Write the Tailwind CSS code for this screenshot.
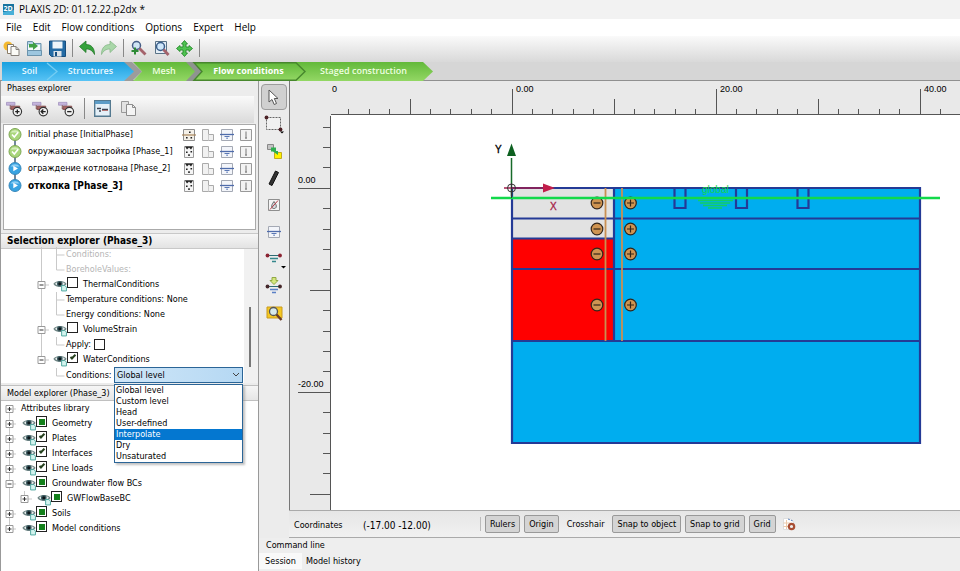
<!DOCTYPE html>
<html lang="en">
<head>
    <meta charset="UTF-8">
    <meta name="viewport" content="width=device-width, initial-scale=1.0">
    <title>PLAXIS 2D: 01.12.22.p2dx *</title>
    <script src="https://cdn.jsdelivr.net/npm/@tailwindcss/browser@4"></script>
</head>
<body class="h-screen flex flex-col overflow-hidden bg-[#ececec] text-black font-['DejaVu_Sans_Condensed','DejaVu_Sans',sans-serif] text-[9px] leading-[15px]">

  <!-- shared icons -->
  <svg class="hidden">
    <symbol id="eye" viewBox="0 0 13 13">
      <path d="M1 5.500C3 2.600 10 2.600 12 5.500C10 8.400 3 8.400 1 5.500Z" fill="#e8eeee" stroke="#6f8584" stroke-width="1"/>
      <circle cx="6.3" cy="5.4" r="2.6" fill="#3f5d63"/><circle cx="6.3" cy="5.3" r="1.4" fill="#0b1518"/>
      <path d="M8 7h3l1.500 1.500v3.500H8z" fill="#d3f3ee" stroke="#4fa79f" stroke-width=".9"/>
    </symbol>
    <symbol id="phase-done" viewBox="0 0 14 14">
      <circle cx="7" cy="7" r="6" fill="#a9d67c" stroke="#7da653"/><path d="M2.500 5a5 4 0 0 1 9 0z" fill="#d4edba"/>
      <path d="M4 7l2.300 2.500L10.200 4.800" fill="none" stroke="#fff" stroke-width="1.6"/>
    </symbol>
    <symbol id="phase-todo" viewBox="0 0 14 14">
      <circle cx="7" cy="7" r="6" fill="#38a3e2" stroke="#3987b8"/><path d="M2.500 5a5 4 0 0 1 9 0z" fill="#8fd0f5"/>
      <path d="M5.300 4.200L10 7l-4.700 2.800z" fill="#fff"/>
    </symbol>
    <symbol id="calc-k0" viewBox="0 0 14 14">
      <path d="M1.500 1.500h11v11h-11z" fill="#f4f0e8" stroke="#8d8d8d"/><path d="M0 7h14" stroke="#a9865a" stroke-width="1.2"/>
      <path d="M7 3.500h1.600V5H7zM4 9h1.600v1.600H4zM8.500 9h1.600v1.600H8.500z" fill="#222"/>
    </symbol>
    <symbol id="calc-plastic" viewBox="0 0 14 14">
      <path d="M2.500 1.500h9v11h-9z" fill="#f5f5f5" stroke="#9a9a9a"/>
      <path d="M3 1.500h8L9 4.500 7 2.500 5 4.500z" fill="#222"/><path d="M4 6.500h1.600v1.600H4zM8.500 6h1.600v1.600H8.500zM6.200 9.300h1.600v1.600H6.200z" fill="#222"/>
    </symbol>
    <symbol id="staged" viewBox="0 0 14 14">
      <path d="M1.500 1.500h6v5h5v6h-11z" fill="#f1f1f1" stroke="#aaa"/><path d="M7.500 6.500v6" stroke="#ccc"/>
    </symbol>
    <symbol id="water" viewBox="0 0 14 14">
      <path d="M1.500 1.500h11v11h-11z" fill="#f3f5fa" stroke="#a4a9b4"/><path d="M0 6.500h14" stroke="#4f6cab" stroke-width="1.300"/>
      <path d="M4.500 8.500h5M6.200 10.200h1.800" stroke="#5a78b5"/>
    </symbol>
    <symbol id="thermo" viewBox="0 0 14 14">
      <path d="M1.500 1.500h11v11h-11z" fill="#f3f3f3" stroke="#999"/><path d="M7 3.500v7M6 10h2" stroke="#777"/>
    </symbol>
    <symbol id="phase-bars" viewBox="0 0 18 18">
      <path d="M.5 2.500h9v3h-9z" fill="#c5b5dc" stroke="#a08fbd" stroke-width=".8"/>
      <path d="M4.500 5.500v4h3" fill="none" stroke="#7a4848"/><path d="M5.500 6.500h9v3.500h-9z" fill="#a86464" stroke="#7d4747" stroke-width=".8"/>
      <circle cx="12" cy="12.300" r="4.500" fill="#f2f2f2" stroke="#333" stroke-width="1.200"/>
    </symbol>
  </svg>

  <header>
    <div class="flex items-center gap-[5px] h-[19px] px-[3px] bg-[#f2f2f2] font-['Open_Sans','Noto_Sans',sans-serif] text-[10px]">
      <svg class="size-[11px]" viewBox="0 0 11 11" aria-hidden="true"><path d="M0 0h11v11H0z" fill="#17739f"/><path d="M0 8l11-2v5H0z" fill="#49b0d8"/><text x="0.500" y="7" font-size="7" font-weight="bold" fill="#fff">2D</text></svg>
      <h1>PLAXIS 2D: 01.12.22.p2dx *</h1>
    </div>
    <nav class="flex items-center gap-[11px] h-[17px] px-[6px] bg-white font-['Open_Sans','Noto_Sans',sans-serif] text-[10px]" aria-label="Menu">
      <button>File</button><button>Edit</button><button>Flow conditions</button><button>Options</button><button>Expert</button><button>Help</button>
    </nav>
    <div class="flex items-center gap-[6px] h-[26px] px-[3px] pb-[2px] bg-linear-to-b from-[#fafafa] to-[#d9d9d9]">
      <button aria-label="New"><svg class="size-[17px]" viewBox="0 0 17 17"><circle cx="5" cy="6" r="4.500" fill="#f5b92e"/><path d="M4.500 4.500h6v9h-6z" fill="#fff" stroke="#8b7d67"/><path d="M8 6.500h5l3 3v6H8z" fill="#fbfbf7" stroke="#85807a"/><path d="M13 6.500v3h3" fill="none" stroke="#85807a"/></svg></button>
      <button aria-label="Open"><svg class="size-[17px]" viewBox="0 0 17 17"><path d="M1.500 1.500h5l1.500 2h7v12h-13.500z" fill="#b6d4e6" stroke="#6b93ac"/><path d="M2 5h12v5H2z" fill="#f4fafc"/><path d="M3 4h4V2l5 4-5 4V7.500H3z" fill="#3fa045"/><path d="M1.500 10.500h14v5h-14z" fill="#9dc6df" stroke="#6b93ac"/></svg></button>
      <button aria-label="Save"><svg class="size-[17px]" viewBox="0 0 17 17"><path d="M.5 1h16v15.500h-14l-2-2z" fill="#246ba4" stroke="#174e7e"/><path d="M3.500 1.500h10v7h-10z" fill="#edf5fa"/><path d="M4.500 11h8v5.500h-8z" fill="#dce3e8"/><path d="M6 12h2v4H6z" fill="#174e7e"/></svg></button>
      <span class="w-px h-[18px] bg-[#888]"></span>
      <button aria-label="Undo"><svg class="size-4" viewBox="0 0 16 16"><path d="M.5 6.500L7 1v3.500c5 0 8.500 3 8.500 10C13.500 10.500 11 9 7 9v3.500z" fill="#35a23b" stroke="#237829" stroke-width=".8"/></svg></button>
      <button aria-label="Redo"><svg class="size-4" viewBox="0 0 16 16"><path d="M15.500 6.500L9 1v3.500c-5 0-8.500 3-8.500 10C2.500 10.500 5 9 9 9v3.500z" fill="#a9d7a9" stroke="#88b889" stroke-width=".8"/></svg></button>
      <span class="w-px h-[18px] bg-[#888]"></span>
      <button aria-label="Zoom"><svg class="size-[17px]" viewBox="0 0 17 17"><circle cx="6.500" cy="5.500" r="4" fill="#cfe4f4" stroke="#465e87" stroke-width="1.500"/><path d="M9.500 8.500l6 6" stroke="#a4636b" stroke-width="2.800"/><path d="M5 7.500v7M1.500 11h7" stroke="#2d8a35" stroke-width="2"/></svg></button>
      <button aria-label="Zoom window"><svg class="size-[17px]" viewBox="0 0 17 17"><path d="M2.500 1.500h11v12h-11z" fill="#e5eef5" stroke="#5a7387"/><circle cx="7.500" cy="6.500" r="4" fill="#cfe7fa" stroke="#3a5e8a" stroke-width="1.500"/><path d="M10.500 9.500l5 5.500" stroke="#a4636b" stroke-width="2.800"/></svg></button>
      <button aria-label="Zoom out full"><svg class="size-[17px]" viewBox="0 0 17 17"><path d="M8.500.5l3 3.500H10v3h3V5.500l3.500 3-3.500 3V10h-3v3h1.500l-3 3.500-3-3.500H7v-3H4v1.500L.5 8.500 4 5.500V7h3V4H5.500z" fill="#4fc351" stroke="#268a2b" stroke-width=".9"/></svg></button>
      <span class="w-px h-[18px] bg-[#888]"></span>
    </div>
    <nav class="relative flex h-[19px] bg-[#d6d6d6] border-b border-[#909090] text-[9px] leading-[18px] font-['Open_Sans','Noto_Sans',sans-serif] font-semibold text-[#e8f8ff]" aria-label="Modes">
      <svg class="absolute left-0 top-0 w-[434px] h-[19px]" viewBox="0 0 434 19" aria-hidden="true">
        <defs>
          <linearGradient id="blue" x1="0" y1="0" x2="0" y2="1"><stop offset="0" stop-color="#18a0df"/><stop offset="1" stop-color="#58c3f5"/></linearGradient>
          <linearGradient id="green" x1="0" y1="0" x2="0" y2="1"><stop offset="0" stop-color="#62b93a"/><stop offset="1" stop-color="#93d764"/></linearGradient>
        </defs>
        <path d="M122 0h10l10 9.500L132 19h-10z" fill="#9c9c9c"/>
        <path d="M2 0h122l10 9.500L124 19H2z" fill="url(#blue)"/>
        <path d="M47 1l10 8.500L47 18" fill="none" stroke="#74cdf3" stroke-width="1.300"/>
        <path d="M133 0h58l9 9.500-9 9.500h-58l9-9.500z" fill="url(#green)"/>
        <path d="M186 0h12l9 9.500-9 9.500h-12l9-9.500z" fill="#8f9490"/>
        <path d="M295 0h128l10 9.500L423 19H295z" fill="url(#green)"/>
        <path d="M194 .7h102l9 8.800-9 8.800H194l8-8.800z" fill="url(#green)" stroke="#47872d" stroke-width="1.400"/>
      </svg>
      <button class="relative w-[59px]">Soil</button>
      <button class="relative w-[63px]">Structures</button>
      <button class="relative w-[84px] text-[#efffe0]">Mesh</button>
      <button class="relative w-[85px] text-white font-bold">Flow conditions</button>
      <button class="relative w-[145px] text-[#efffe0]">Staged construction</button>
    </nav>
  </header>

  <div class="flex flex-1 min-h-0">
    <aside class="flex flex-col w-[259px] shrink-0 border-x border-[#999] bg-[#ececec]">
      <section>
        <h2 class="px-[6px]">Phases explorer</h2>
        <div class="flex items-center h-[27px] px-[5px] gap-[9px] pb-[2px] border-r-4 border-[#ececec] bg-linear-to-b from-[#fafafa] to-[#dadada]">
          <button aria-label="Add phase"><svg class="size-[17px]" viewBox="0 0 18 18"><use href="#phase-bars"/><path d="M12 10v4.600M9.700 12.300h4.600" stroke="#222" stroke-width="1.400"/></svg></button>
          <button aria-label="Insert phase"><svg class="size-[17px]" viewBox="0 0 18 18"><use href="#phase-bars"/><path d="M9.500 12.300h5M12 10l-2.300 2.300L12 14.600" fill="none" stroke="#222" stroke-width="1.400"/></svg></button>
          <button aria-label="Delete phase"><svg class="size-[17px]" viewBox="0 0 18 18"><use href="#phase-bars"/><path d="M9.700 12.300h4.600" stroke="#222" stroke-width="1.400"/></svg></button>
          <span class="w-px h-[21px] bg-[#888]"></span>
          <button aria-label="Edit phase"><svg class="size-[17px]" viewBox="0 0 17 17"><path d="M.7.7h15.600v15.600H.7z" fill="#e4f0f8" stroke="#547990" stroke-width="1.400"/><path d="M1 1h15v3H1z" fill="#5c9cc7"/><path d="M3 8.500h4M8 9.500h6M5 11h2" stroke="#3c4250" stroke-width="1.300"/><path d="M8 10.500h6" stroke="#b27474"/></svg></button>
          <button aria-label="Copy"><svg class="size-[17px]" viewBox="0 0 17 17"><path d="M1.500 1.500h7v11h-7z" fill="#e2e2e2" stroke="#999"/><path d="M6.500 4.500h6l3 3v8h-9z" fill="#f4f4f4" stroke="#8d8d8d"/><path d="M12.500 4.500v3h3" fill="none" stroke="#8d8d8d"/></svg></button>
        </div>
        <ul id="phases" class="h-[106px] mx-[2px] mt-px pt-px bg-white border border-[#aaa] leading-[17px]"></ul>
      </section>

      <section class="flex flex-col">
        <h2 class="mt-[3px] px-[6px] font-bold border-y border-[#c8c8c8] bg-linear-to-b from-[#f6f6f6] to-[#e3e3e3] text-[10px] leading-[14px]">Selection explorer (Phase_3)</h2>
        <div class="relative flex bg-white">
          <div id="selection" class="flex-1 pl-px -mt-[2px]"></div>
          <div class="w-[14px] bg-[#f1f1f1] pt-[58px]"><div class="w-[2px] h-[60px] ml-[5px] bg-[#777]"></div></div>
          <ul role="listbox" aria-label="Conditions options" class="absolute z-10 left-[113px] top-full mt-px w-[129px] bg-white border border-[#2b6597] shadow-[2px_2px_2px_#8888] leading-[11px]">
            <li role="option" class="px-px">Global level</li>
            <li role="option" class="px-px">Custom level</li>
            <li role="option" class="px-px">Head</li>
            <li role="option" class="px-px">User-defined</li>
            <li role="option" aria-selected="true" class="px-px bg-[#0477d0] text-white">Interpolate</li>
            <li role="option" class="px-px">Dry</li>
            <li role="option" class="px-px">Unsaturated</li>
          </ul>
        </div>
      </section>

      <section class="flex flex-col flex-1">
        <h2 class="mt-[2px] px-[6px] border-y border-[#c0c0c0] bg-linear-to-b from-[#f6f6f6] to-[#e6e6e6] leading-[14px]">Model explorer (Phase_3)</h2>
        <div id="model" class="flex-1 bg-white"></div>
      </section>
    </aside>

    <div class="flex flex-col flex-1 min-w-0">
      <div class="flex flex-1 min-h-0">
        <div class="flex flex-col items-center gap-[1px] w-[31px] shrink-0 pt-[3px] border-r border-[#777]" role="toolbar" aria-label="Tools">
          <button aria-label="Select" class="grid place-items-center size-[26px] rounded-sm border border-[#9c9c9c] bg-[#d0d0d0]"><svg class="size-4" viewBox="0 0 16 16"><path d="M3 1v12l3-2.500 2.200 5 2.300-1L8.300 9.500H12z" fill="#fff" stroke="#555"/></svg></button>
          <button aria-label="Select rectangle" class="grid place-items-center size-[26px]"><svg class="size-5" viewBox="0 0 20 20"><path d="M2.500 3.500h14v12h-14z" fill="#f1f1f1" stroke="#666" stroke-dasharray="2 1"/><circle cx="2.500" cy="3.500" r="1.900" fill="#4c2226"/><circle cx="16.500" cy="15.500" r="1.900" fill="#4c2226"/><path d="M16 17.500h4l-2 2z"/></svg></button>
          <button aria-label="Show materials" class="grid place-items-center size-[26px]"><svg class="size-4" viewBox="0 0 16 16"><path d="M1.500 1.500h6v5h-6z" fill="#c4c4c4" stroke="#888"/><path d="M8.500 9.500h7v6h-7z" fill="#fff200" stroke="#c0ab20"/><path d="M5 4.500h5V8h2v4L7 8.500H5z" fill="#2fae50"/></svg></button>
          <button aria-label="Draw" class="grid place-items-center size-[26px]"><svg class="size-4" viewBox="0 0 16 16"><path d="M9.500 1l3 1.500-6.500 13-3-1.500z" fill="#333" stroke="#111"/></svg></button>
          <button aria-label="Dry cluster" class="grid place-items-center size-[26px]"><svg class="size-4" viewBox="0 0 16 16"><path d="M2.500 2.500h11v11h-11z" fill="#f4f4f4" stroke="#8e8e8e"/><path d="M8 4.500c4 5 2 7 0 7s-4-2 0-7z" fill="#d8dce1" stroke="#666"/><path d="M4 12.500l8-9" stroke="#b33b44"/></svg></button>
          <button aria-label="Water conditions" class="grid place-items-center size-[26px]"><svg class="size-[14px]"><use href="#water"/></svg></button>
          <button aria-label="Create water level" class="grid place-items-center size-[26px]"><svg class="size-5 overflow-visible" viewBox="0 0 20 20"><path d="M4 6.500h13" stroke="#2e6c74"/><circle cx="3.500" cy="6.500" r="1.900" fill="#8c2433"/><circle cx="16" cy="6.500" r="1.900" fill="#8c2433"/><path d="M6 9.500h8M8 12.500h4" stroke="#35878c" stroke-width="1.500"/><path d="M17 17h5l-2.500 2.500z"/></svg></button>
          <button aria-label="Generate level" class="grid place-items-center size-[26px]"><svg class="size-5" viewBox="0 0 20 20"><path d="M8 1.500h4v3h2l-4 4-4-4h2z" fill="#d4e77d" stroke="#91a845"/><path d="M3 10.500h14" stroke="#2e6c74"/><circle cx="3.500" cy="10.500" r="1.900" fill="#46282b"/><circle cx="16" cy="10.500" r="1.900" fill="#46282b"/><path d="M6 13.500h8M8 16.500h4" stroke="#5a7fc6" stroke-width="1.500"/></svg></button>
          <button aria-label="Preview" class="grid place-items-center size-[26px]"><svg class="size-[17px]" viewBox="0 0 17 17"><path d="M1 2h15v11H1z" fill="#f5c822" stroke="#c89a1e"/><circle cx="7.500" cy="6.500" r="4" fill="#d7e9ea" stroke="#555" stroke-width="1.300"/><path d="M10.500 9.500l5 5.500" stroke="#6b3c25" stroke-width="2.500"/></svg></button>
        </div>

        <main class="flex-1 min-w-0 bg-[#e9e9e9]">
          <svg class="w-full h-full" viewBox="290 81 670 429" preserveAspectRatio="xMinYMin slice" font-family="Liberation Sans, sans-serif" font-size="9">
            <rect x="331" y="115" width="660" height="520" fill="#fff"/>
            <g id="ruler" stroke="#555" stroke-width="1" fill="none" shape-rendering="crispEdges"><path d="M331 114.500h660M330.500 116v520"/></g>
            <g>
              <text x="332" y="92">0</text><text x="516" y="92">0.00</text><text x="720" y="92">20.00</text><text x="924" y="92">40.00</text>
              <text x="298" y="183">0.00</text><text x="298" y="387">-20.00</text>
            </g>
            <path d="M512 188h408v255H512z" fill="#00adef"/>
            <path d="M512 188h102v50H512z" fill="#e2e2e2"/>
            <path d="M512 238h102v103H512z" fill="#f00"/>
            <path d="M512 188h408v255H512zM512 218.500h408M512 238.500h102M512 269h408M512 341h408M614 188v153M674.500 188v20h11v-20M736 188v20h11v-20M797.500 188v20h11v-20" fill="none" stroke="#243a96" stroke-width="2.200"/>
            <path d="M605.500 188v153M622 188v153" stroke="#c98f52" stroke-width="1.800"/>
            <g id="interfaces" fill="#cf9451" stroke="#33251a" stroke-width="1.200"></g>
            <path d="M491 198h449" stroke="#12d94b" stroke-width="2.400"/>
            <path d="M698 200.500h35M700 203h30M703 205.500h24M708 208h14" stroke="#12cf63" stroke-width="1.700"/>
            <text x="702" y="193" fill="#12d94b" font-size="10">global</text>
            <path d="M511.500 196v-38" stroke="#176a2a" stroke-width="1.500"/><path d="M511.500 143.500l4.500 12.500h-9z" fill="#0d6020"/>
            <path d="M504 188h40" stroke="#a01e4c" stroke-width="1.500"/><path d="M543 183.500l12 4.500-12 4.500z" fill="#c21d4a"/>
            <circle cx="511.500" cy="188" r="4" fill="none" stroke="#333"/>
            <path d="M511.500 183v15" stroke="#333"/>
            <text x="495" y="153" font-size="10" stroke="#000" stroke-width=".3">Y</text><text x="550" y="210" font-size="10" fill="#a51e48" stroke="#a51e48" stroke-width=".3">X</text>
          </svg>
        </main>
      </div>

      <footer>
        <div class="flex items-center gap-1 h-[28px] ml-[30px] px-[5px] border-t border-b border-[#aaa] bg-linear-to-b from-[#e6e6e6] to-[#f1f1f1]">
          <span class="w-[65px] pt-[2px]">Coordinates</span>
          <output class="w-[113px] pt-[2px] text-[10px]">(-17.00 -12.00)</output>
          <span class="w-px h-[14px] bg-[#bbb]"></span>
          <button class="h-[18px] px-1 rounded-xs border border-[#999] bg-[#d4d4d4]">Rulers</button>
          <button class="h-[18px] px-1 rounded-xs border border-[#999] bg-[#d4d4d4]">Origin</button>
          <button class="h-[18px] px-1">Crosshair</button>
          <button class="h-[18px] px-1 rounded-xs border border-[#999] bg-[#d4d4d4]">Snap to object</button>
          <button class="h-[18px] px-1 rounded-xs border border-[#999] bg-[#d4d4d4]">Snap to grid</button>
          <button class="h-[18px] px-1 rounded-xs border border-[#999] bg-[#d4d4d4]">Grid</button>
          <button aria-label="Snapping options" class="ml-[2px]"><svg class="size-[14px]" viewBox="0 0 14 14"><path d="M1.500 1.500h7l3 3v8h-10z" fill="#fff" stroke="#ddd"/><path d="M1.500 6h7M1.500 9.500h7M4.500 3v9" stroke="#ecc9a9"/><path d="M6 2l5 2" stroke="#5d83bd" stroke-dasharray="2 1"/><circle cx="9.500" cy="9.500" r="2.700" fill="#eee" stroke="#a84e34" stroke-width="2.200"/></svg></button>
        </div>
        <div class="h-[33px] bg-[#eee]">
          <h2 class="px-[7px]">Command line</h2>
          <div class="flex h-[16px]" role="tablist">
            <button role="tab" aria-selected="true" class="w-[43px] bg-[#f9f9f9]">Session</button>
            <button role="tab" class="px-1">Model history</button>
          </div>
        </div>
      </footer>
    </div>
  </div>

  <script>
    const phases = [
      ['phase-done', 'calc-k0', 'Initial phase [InitialPhase]'],
      ['phase-done', 'calc-plastic', 'окружаюшая застройка [Phase_1]'],
      ['phase-todo', 'calc-plastic', 'ограждение котлована [Phase_2]'],
      ['phase-todo', 'calc-plastic', 'откопка [Phase_3]'],
    ];
    document.getElementById('phases').innerHTML = phases.map(([state, calc, name], i) => `
      <li class="flex items-center h-[17px] pl-1 pr-[2px]">
        <svg class="w-[14px] h-[17px]" viewBox="0 0 14 17">
          <path d="M7 ${i ? 0 : 8}V${i < 3 ? 17 : 8}" stroke="#44607a" stroke-width="1.500"/>
          <use href="#${state}" y="1.500" width="14" height="14"/>
        </svg>
        <span class="flex-1 pl-[6px] whitespace-nowrap ${i === 3 ? 'font-bold text-[10px]' : ''}">${name}</span>
        <span class="flex gap-[5px]">${[calc, 'staged', 'water', 'thermo'].map(id => `<svg class="size-[14px]"><use href="#${id}"/></svg>`).join('')}</span>
      </li>`).join('');

    // lead of a tree row: guide lines, and the expander box where sign is given
    function lead(w, lines, boxX, sign) {
      const box = sign ? `<path d="M${boxX - 3.5} 4.500h7v7h-7z" fill="#fff" stroke="#999"/><path d="M${boxX - 2} 8h4${sign === '+' ? `M${boxX} 6v4` : ''}" stroke="#333"/>` : '';
      return `<svg class="shrink-0" width="${w}" height="15" viewBox="0 0 ${w} 15"><path d="${lines}" stroke="#c9c9c9" fill="none"/>${box}</svg>`;
    }
    const eye = '<svg class="size-[14px] shrink-0"><use href="#eye"/></svg>';
    function check(id, state) {
      const mark = {
        mixed: "before:block before:size-[6px] before:bg-[#13801b]",
        on: "before:block before:w-[6px] before:h-[3px] before:-rotate-45 before:-translate-y-px before:border-l-2 before:border-b-2 before:border-[#26411f]",
        off: '',
      }[state];
      return `<input type="checkbox" id="${id}" ${state === 'on' ? 'checked' : ''} class="appearance-none grid place-content-center size-[11px] shrink-0 border border-[#222] bg-white ${mark}">`;
    }
    const leaf = (end, html) => `<div class="flex items-center h-[15px]">${lead(64, `M39.500 0V15M54.500 0V${end ? 8 : 15}M54.500 8h8`)}${html}</div>`;
    const node = (id, name, state, last) => `<div class="flex items-center h-[15px]">${lead(51, `M39.500 0V${last ? 8 : 15}M39 8h8`, 39.5, '-')}${eye}<span class="mb-1 flex">${check(id, state)}</span><label for="${id}" class="pl-[5px]">${name}</label></div>`;

    document.getElementById('selection').innerHTML =
      leaf(false, '<span class="text-[#b5b5b5]">Conditions:</span>') +
      leaf(true, '<span class="text-[#b5b5b5]">BoreholeValues:</span>') +
      node('thermal', 'ThermalConditions', 'off') +
      leaf(false, 'Temperature conditions: None') +
      leaf(true, 'Energy conditions: None') +
      node('strain', 'VolumeStrain', 'off') +
      leaf(true, `<label for="apply" class="pr-[3px]">Apply:</label>${check('apply', 'off')}`) +
      node('waterc', 'WaterConditions', 'on', true) +
      `<div class="flex items-center h-4">${lead(64, 'M54.500 0V8M54.500 8h8')}<label for="cond" class="w-12">Conditions:</label>
        <div class="relative -mr-[3px] w-[129px]">
          <select id="cond" class="appearance-none block w-full h-4 pl-[2px] border border-[#2b6597] bg-linear-to-r from-[#cfe6f8] to-[#b5d8f3]"><option>Global level</option></select>
          <svg class="absolute right-[3px] top-1 w-2 h-2" viewBox="0 0 8 8"><path d="M1 2l3 3 3-3" fill="none" stroke="#444"/></svg>
        </div></div>`;

    const model = [
      ['Geometry', 'mixed', '+'], ['Plates', 'on', '+'], ['Interfaces', 'on', '+'], ['Line loads', 'on', '+'],
      ['Groundwater flow BCs', 'mixed', '-'], ['GWFlowBaseBC', 'mixed', '+', true], ['Soils', 'mixed', '+'], ['Model conditions', 'mixed', '+'],
    ];
    document.getElementById('model').innerHTML =
      `<div class="flex items-center h-[15px]">${lead(20, 'M8.500 8V15M8 8h7', 8.5, '+')}Attributes library</div>` +
      model.map(([name, state, sign, sub], i) => `<div class="flex items-center h-[15px]">${
        sub ? lead(36, 'M8.500 0V15M23.500 0V8M23 8h8', 23.5, sign) : lead(21, `M8.500 0V${i === 7 ? 8 : 15}M8 8h7`, 8.5, sign)
      }${eye}<span class="mb-1 flex">${check('m' + i, state)}</span><label for="m${i}" class="pl-[5px]">${name}</label></div>`).join('');

    // ruler ticks: one per 2 m, longer at 10 m, longest at 20 m
    let ticks = '';
    for (let i = -8; i <= 23; i++) ticks += `M${(512 + i * 20.4).toFixed(1)} 114V${i % 10 === 0 ? 89 : i % 5 === 0 ? 99 : 109}`;
    for (let i = -3; i <= 20; i++) ticks += `M330 ${(188.3 + i * 20.4).toFixed(1)}H${i % 10 === 0 ? 298 : i % 5 === 0 ? 310 : 323}`;
    document.getElementById('ruler').innerHTML += `<path d="${ticks}"/>`;

    document.getElementById('interfaces').innerHTML = [203, 229, 254, 305].map(y => `
      <circle cx="597" cy="${y}" r="5.800"/><path d="M593.500 ${y}h7"/>
      <circle cx="630.500" cy="${y}" r="5.800"/><path d="M627 ${y}h7M630.500 ${y - 3.5}v7"/>`).join('');
  </script>
</body>
</html>
